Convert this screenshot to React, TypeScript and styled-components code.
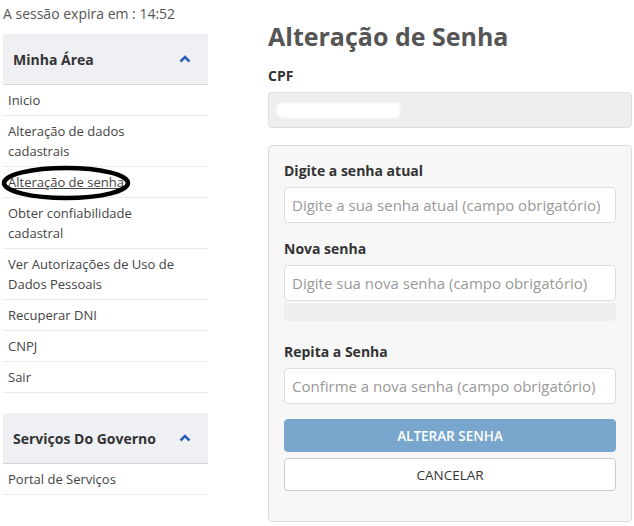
import React from 'react';
import styled, { createGlobalStyle } from 'styled-components';

const GlobalStyle = createGlobalStyle`
  body {
    margin: 0;
    background: #fff;
    font-family: 'Open Sans', 'Noto Sans', sans-serif;
    color: #333;
  }
`;

const Page = styled.div`
  display: grid;
  grid-template-columns: 205px 364px;
  column-gap: 60px;
  padding: 4px 0 0 3px;
`;

const SideColumn = styled.aside`
  display: flex;
  flex-direction: column;
`;

const SessionInfo = styled.div`
  font-size: 14px;
  line-height: 20px;
  color: #555;
  margin-bottom: 10px;
`;

const MenuGroup = styled.nav<{ $spaced?: boolean }>`
  display: flex;
  flex-direction: column;
  margin-top: ${(p) => (p.$spaced ? '20px' : '0')};
`;

const MenuHeader = styled.div`
  display: flex;
  align-items: center;
  justify-content: space-between;
  height: 50px;
  padding: 0 17px 0 10px;
  background: #eef0f3;
  border-bottom: 1px solid #d4d6d9;
  font-size: 14px;
  font-weight: 700;
  color: #333;
`;

const MenuItem = styled.a<{ $active?: boolean }>`
  position: relative;
  display: block;
  padding: 5px 30px 5px 5px;
  font-size: 13px;
  line-height: 20px;
  color: #444;
  text-decoration: ${(p) => (p.$active ? 'underline' : 'none')};
  border-bottom: 1px solid #ececec;
  cursor: pointer;
`;

const Marker = styled.svg`
  position: absolute;
  left: -3px;
  top: -2px;
  pointer-events: none;
`;

const Main = styled.main`
  display: flex;
  flex-direction: column;
`;

const Title = styled.h1`
  margin: 16px 0 14px;
  font-size: 25px;
  line-height: 32px;
  font-weight: 700;
  color: #555;
`;

const FieldLabel = styled.label`
  display: block;
  font-size: 14px;
  line-height: 20px;
  font-weight: 700;
  color: #333;
  margin-bottom: 6px;
`;

const ReadOnlyField = styled.div`
  display: flex;
  align-items: center;
  height: 34px;
  padding: 0 7px;
  background: #eeeeee;
  border: 1px solid #dddddd;
  border-radius: 4px;
  margin-bottom: 17px;
`;

const Redacted = styled.span`
  width: 124px;
  height: 15px;
  background: #fff;
  border-radius: 6px 3px 5px 8px;
  filter: blur(1.2px);
`;

const Panel = styled.form`
  display: flex;
  flex-direction: column;
  padding: 15px 15px 30px;
  background: #f7f7f7;
  border: 1px solid #dddddd;
  border-radius: 4px;
`;

const Field = styled.div<{ $gap?: number }>`
  display: flex;
  flex-direction: column;
  margin-bottom: ${(p) => p.$gap ?? 16}px;
`;

const TextInput = styled.input`
  box-sizing: border-box;
  height: 36px;
  padding: 0 7px;
  background: #fff;
  border: 1px solid #dddddd;
  border-radius: 4px;
  font-family: inherit;
  font-size: 15px;
  color: #333;

  &::placeholder {
    color: #999;
  }
`;

const Strength = styled.div`
  height: 18px;
  margin-top: 2px;
  background: #efefef;
  border-radius: 3px;
`;

const Button = styled.button<{ $primary?: boolean }>`
  height: 33px;
  border-radius: 4px;
  font-family: inherit;
  font-size: 13.5px;
  font-weight: ${(p) => (p.$primary ? 600 : 400)};
  color: ${(p) => (p.$primary ? '#fff' : '#333')};
  background: ${(p) => (p.$primary ? '#78a6cd' : '#fff')};
  border: 1px solid ${(p) => (p.$primary ? '#78a6cd' : '#cccccc')};
  & + & {
    margin-top: 6px;
  }
`;

const Chevron = () => (
  <svg width="12" height="8" viewBox="0 0 12 8">
    <polyline points="1.5,6.5 6,2 10.5,6.5" fill="none" stroke="#2c5fb0" strokeWidth="2.6" />
  </svg>
);

const accountItems = [
  'Inicio',
  'Alteração de dados cadastrais',
  'Alteração de senha',
  'Obter confiabilidade cadastral',
  'Ver Autorizações de Uso de Dados Pessoais',
  'Recuperar DNI',
  'CNPJ',
  'Sair',
];

export default function App() {
  return (
    <>
      <GlobalStyle />
      <Page>
        <SideColumn>
          <SessionInfo>A sessão expira em : 14:52</SessionInfo>
          <MenuGroup>
            <MenuHeader>
              Minha Área
              <Chevron />
            </MenuHeader>
            {accountItems.map((label) => {
              const active = label === 'Alteração de senha';
              return (
                <MenuItem key={label} $active={active}>
                  {label}
                  {active && (
                    <Marker width="134" height="36" viewBox="0 0 134 36">
                      <ellipse cx="66" cy="18" rx="62" ry="15" fill="none" stroke="#000" strokeWidth="4.5" />
                    </Marker>
                  )}
                </MenuItem>
              );
            })}
          </MenuGroup>
          <MenuGroup $spaced>
            <MenuHeader>
              Serviços Do Governo
              <Chevron />
            </MenuHeader>
            <MenuItem>Portal de Serviços</MenuItem>
          </MenuGroup>
        </SideColumn>

        <Main>
          <Title>Alteração de Senha</Title>
          <FieldLabel>CPF</FieldLabel>
          <ReadOnlyField>
            <Redacted />
          </ReadOnlyField>

          <Panel onSubmit={(e) => e.preventDefault()}>
            <Field>
              <FieldLabel>Digite a senha atual</FieldLabel>
              <TextInput type="password" placeholder="Digite a sua senha atual (campo obrigatório)" />
            </Field>
            <Field $gap={21}>
              <FieldLabel>Nova senha</FieldLabel>
              <TextInput type="password" placeholder="Digite sua nova senha (campo obrigatório)" />
              <Strength />
            </Field>
            <Field $gap={15}>
              <FieldLabel>Repita a Senha</FieldLabel>
              <TextInput type="password" placeholder="Confirme a nova senha (campo obrigatório)" />
            </Field>
            <Button type="submit" $primary>ALTERAR SENHA</Button>
            <Button type="button">CANCELAR</Button>
          </Panel>
        </Main>
      </Page>
    </>
  );
}
